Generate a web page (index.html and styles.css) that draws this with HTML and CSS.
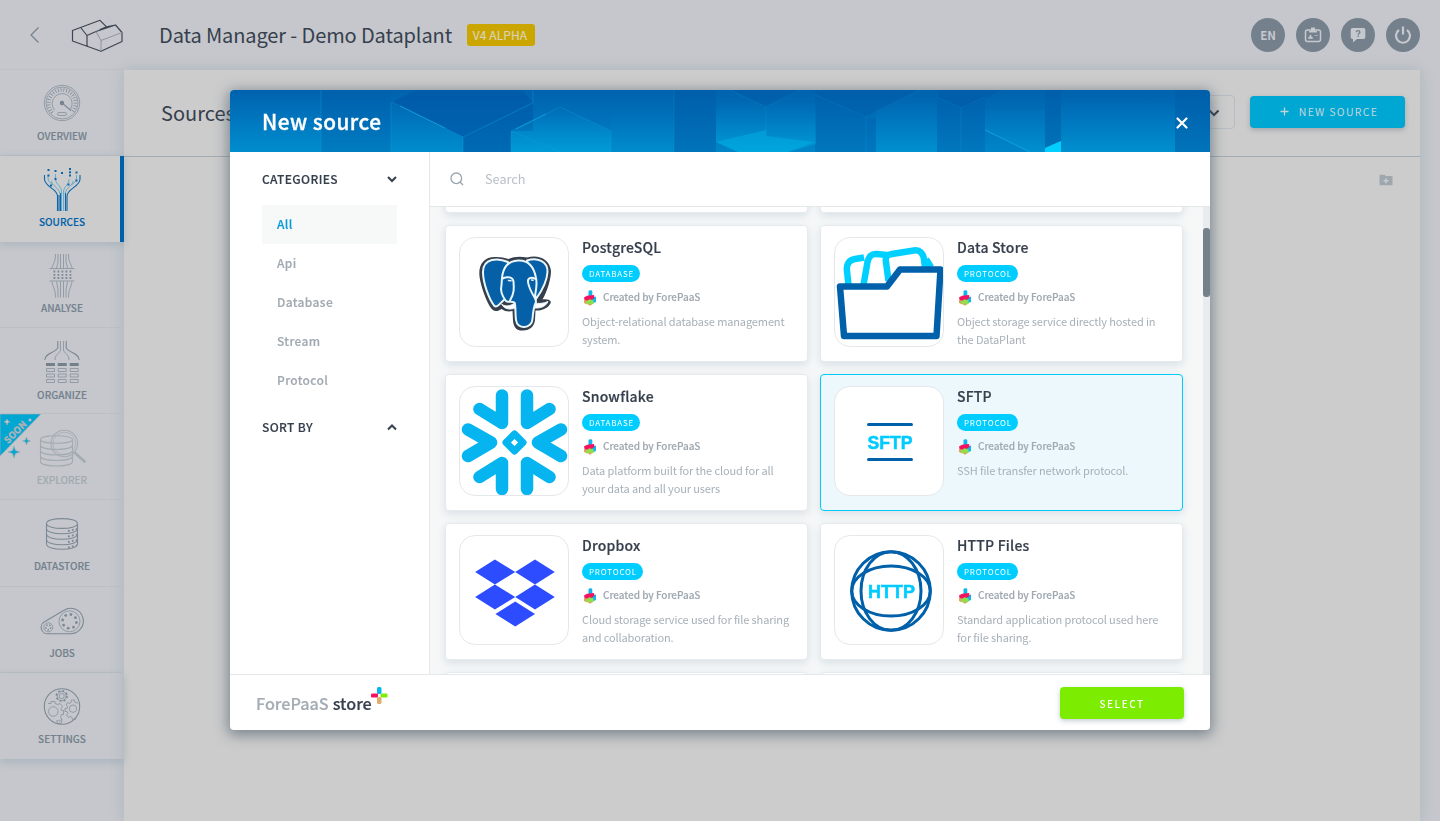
FILE: index.html
```html
<!DOCTYPE html>
<html lang="en">
<head>
<meta charset="utf-8">
<title>Data Manager</title>
<link rel="stylesheet" href="styles.css">
</head>
<body>
<svg class="defs" width="0" height="0">
  <symbol id="brand" viewBox="0 0 14 16">
    <path d="M5.500 1.500q0-1.200 2-1.200q1.800 0 1.800 1.200V7h-3.800z" fill="#12b5ec"/>
    <path d="M8 8l5-1.500v5.500L8 14z" fill="#12b5ec"/>
    <path d="M1 7.500l3-1.800 7-.7.500 3-4 2.500-5.500 1.500z" fill="#f5125f"/>
    <path d="M1 10l3 .5v4L1 13z" fill="#e0a35c"/>
    <path d="M3.200 11.200L6.500 9.300l4.100 1.200v3.300L7 15.300 3.200 13.800z" fill="#8fe04a"/>
    <path d="M5 14.300l2-.8 2 .8-2 1.500z" fill="#e0a35c"/>
  </symbol>
</svg>

<div class="app">
  <header class="topbar">
    <svg class="back" width="10" height="18" viewBox="0 0 10 18"><path d="M8.500 1.500L1 9l7.500 7.500"/></svg>
    <svg class="plant" width="52" height="36" viewBox="71 18 52 36">
      <path class="dark" d="M72.500 30.500L100 20.300l6.500 6.500 9-1.800 6.500 7.500v9L101 51.300 72.500 41zM87 35.500V46M87 35.500l9-4M96 31.500l19.500-6.500M106.500 26.800l-7 3M87 35.500L81 28"/>
      <path class="soft" d="M101 40.500l21-8M101 40.500v10.500M101 40.500l-5-9"/>
    </svg>
    <h1>Data Manager - Demo Dataplant</h1>
    <span class="tag">V4 ALPHA</span>
    <div class="tools">
      <span class="round">EN</span>
      <span class="round"><svg width="18" height="18" viewBox="0 0 18 18"><rect x="1.500" y="4" width="15" height="11.500" rx="2" fill="none" stroke="#c6c8cd" stroke-width="1.500"/><path d="M7 1.500h4v3.500h2v1.500H5V5h2z" fill="#c6c8cd"/><path d="M4.500 12.500v-1l1.500-.7V9h1v1.800l1.500.7v1zM10.500 9.500H14" fill="#c6c8cd" stroke="#c6c8cd" stroke-width=".6"/></svg></span>
      <span class="round"><svg width="18" height="18" viewBox="0 0 18 18"><path d="M3.500 2h11a1.800 1.800 0 0 1 1.800 1.800v7.400a1.800 1.800 0 0 1-1.800 1.800H8l-4 3.500V13h-.5a1.800 1.800 0 0 1-1.800-1.800V3.800A1.800 1.800 0 0 1 3.500 2z" fill="#c6c8cd"/><path d="M7.300 6.200c0-2.200 3.600-2 3.600 0 0 1.200-1.700 1.200-1.700 2.500M9.200 9.600v1.300" fill="none" stroke="#74818d" stroke-width="1.300"/></svg></span>
      <span class="round"><svg width="18" height="20" viewBox="0 0 18 20"><path d="M5 5a7 7 0 1 0 8 0M9 1.500v8" fill="none" stroke="#c6c8cd" stroke-width="2.200"/></svg></span>
    </div>
  </header>

  <div class="columns">
    <nav class="side">
      <a class="item">
        <svg width="50" height="44" viewBox="0 0 50 44"><circle cx="25" cy="21" r="17.700"/><circle cx="25" cy="21" r="16"/><path d="M17.500 28a10 10 0 1 1 16-1"/><path class="ticks" d="M15.500 30.500a13.300 13.300 0 1 1 19 0"/><circle class="solid" cx="25" cy="21" r="2.200"/><path class="mid" d="M25 21l9 7.500"/><rect x="20.500" y="30.500" width="9" height="3" rx="1.500"/></svg>
        <span>OVERVIEW</span>
      </a>
      <a class="item active">
        <svg width="50" height="44" viewBox="0 0 50 44"><path class="mid" d="M7.500 7v4c0 8 12.500 9 13 17v15M43 7v4c0 8-12.500 9-13 17v15"/><path class="mid" d="M22 43V27M23.500 43V25M28.500 43V25"/><path class="soft" d="M14.500 13c0 5 7.500 6 8.500 13M18.500 6v5c0 5 5 6 6 12v20M36 13c0 5-7 6-8 13M32 11c0 6-4 6-5.500 12v20M11 7v3c0 4 3 5 5 7M39.500 7v3c0 4-3 5-5 7"/><path class="dots" d="M10.500 1h2v2h-2zM10.500 6.500h2v2h-2zM17.500 2h2v2h-2zM24 4h2v2h-2zM32 0h2v2h-2zM32 3.300h2v2h-2zM32 6.600h2v2h-2zM38.500 3.500h2v2h-2zM17.500 10h2v2h-2zM38.500 11.500h2v2h-2zM13 16.500h2v2h-2zM30.500 15.500h2v2h-2z"/></svg>
        <span>SOURCES</span>
      </a>
      <a class="item">
        <svg width="50" height="44" viewBox="0 0 50 44"><path d="M18.500 0c0 9-2.500 9-3.500 14M31.500 0c0 9 2.500 9 3.500 14M21 0v8l-1.500 6M23.500 0v14M26.500 0v14M29 0v8l1.500 6M12.500 14.500h25M12.500 27h25M18.500 43.500c0-9-2.500-9-3.500-16M31.500 43.500c0-9 2.500-9 3.500-16M21 43.500v-8l-1.500-8M23.500 43.500v-16M26.500 43.500v-16M29 43.500v-8l1.500-8"/><path class="grid" d="M16.500 17.500h18M16.500 20.800h18M16.500 24h18"/></svg>
        <span>ANALYSE</span>
      </a>
      <a class="item organize">
        <svg width="50" height="44" viewBox="0 0 50 44"><path class="mid" d="M20.800 1v7c-3 5-13 5-13 12M29.200 1v7c3 5 13 5 13 12"/><path d="M23.500 1v9c-1 4-5.500 4-5.500 10M26.500 1v9c1 4 5.500 4 5.500 10"/><path class="dots" d="M9 23h9v3H9zM20.700 23h9v3h-9zM32.700 23h9v3h-9z"/><path d="M9.500 28.500h8v3h-8zM21.200 28.500h8v3h-8zM33.200 28.500h8v3h-8zM9.500 34h8v3h-8zM21.200 34h8v3h-8zM33.200 34h8v3h-8zM9.500 39.500h8v3h-8zM21.200 39.500h8v3h-8zM33.200 39.500h8v3h-8z"/></svg>
        <span>ORGANIZE</span>
      </a>
      <a class="item faded">
        <svg width="50" height="44" viewBox="0 0 50 44"><path class="mid" d="M3.500 13.500c0 5 32 5 32 0s-32-5-32 0v22c0 6 32 6 32 0v-22M3.500 19c0 6 32 6 32 0M3.500 24.500c0 6 32 6 32 0M3.500 30c0 6 32 6 32 0"/><circle cx="27.300" cy="17.500" r="13.300" class="mid"/><circle cx="27.300" cy="17.500" r="11.300"/><path class="thick" d="M37.500 26.500l10 9"/></svg>
        <span>EXPLORER</span>
        <svg class="soon" width="42" height="48" viewBox="0 0 42 48"><path d="M0 0h41L0 42z"/><path d="M14 32l1.500 4.500L20 38l-4.500 1.500L14 44l-1.500-4.500L8 38l4.500-1.500zM26.500 23l1 3 3 1-3 1-1 3-1-3-3-1 3-1z"/><path class="spark" d="M7 5l.8 2 2.200.8-2.200.8L7 11l-.8-2.400-2.200-.8 2.200-.8zM30 4.500l1.500 1.500-1.500 1.500L28.500 6z"/><text transform="translate(8 30) rotate(-45)">SOON</text></svg>
      </a>
      <a class="item">
        <svg width="50" height="44" viewBox="0 0 50 44"><path class="mid" d="M9.500 11.500c0 6.500 31 6.500 31 0s-31-6.500-31 0V32c0 7 31 7 31 0V11.500M9.500 16.500c0 7 31 7 31 0M9.500 22c0 7 31 7 31 0M9.500 27.500c0 7 31 7 31 0"/><path class="grid" d="M31 19l9-2M31 24.500l9-2M31 30l9-2M31 35.500l9-2"/></svg>
        <span>DATASTORE</span>
      </a>
      <a class="item">
        <svg width="50" height="44" viewBox="0 0 50 44"><path class="mid" d="M8 22.500L26.500 11.500A12.700 12.700 0 1 1 33 34.700H11.500A6.400 6.400 0 0 1 8 22.500z"/><circle cx="32.500" cy="22.300" r="10.500"/><circle cx="32.500" cy="22.300" r="7" class="cogs"/><circle cx="11.300" cy="28.300" r="4.500"/><circle cx="11.300" cy="28.300" r="2.500" class="cogs small"/></svg>
        <span>JOBS</span>
      </a>
      <a class="item last">
        <svg width="50" height="44" viewBox="0 0 50 44"><circle class="mid" cx="25" cy="21.500" r="17.700"/><circle cx="24.700" cy="11" r="2.600"/><circle cx="24.700" cy="11" r="5.300" class="teeth"/><circle cx="24.700" cy="11" r="4.500"/><circle cx="16.300" cy="26.500" r="4.800"/><path d="M11 18.500h3v-2h4v2l3 1 2-1 2.500 3-1.500 2 .5 2h2v4h-2l-1 3 1.500 1.500-3 2.500-1.500-1.500M20 35v3.500h4l1-4"/><circle cx="36" cy="23.700" r="3.700"/><path d="M41 18l-3-.5-.5-2.500h-3l-.5 2.500-2 1-1.500-1-1.500 2.500 1.500 1.500-.5 2h-2v3h2l1 2-1.500 1.500 2 2.500 2-1 1.500.8.500 2h3l.5-2"/></svg>
        <span>SETTINGS</span>
      </a>
    </nav>

    <main class="panel">
      <div class="panel-head">
        <h2>Sources</h2>
        <div class="picker"><svg width="12" height="8" viewBox="0 0 12 8"><path d="M1.500 1.500L6 6l4.500-4.500"/></svg></div>
        <button class="new"><svg width="9" height="9" viewBox="0 0 9 9"><path d="M4.500 0.500v8M.5 4.500h8"/></svg>NEW SOURCE</button>
      </div>
      <div class="panel-body">
        <svg width="14" height="12" viewBox="0 0 14 12"><path d="M.5 .8h5l1.300 1.300h6.700v9.200H.5z" fill="#9ea7ad"/><path d="M7 4.300v5M4.500 6.800h5" stroke="#cacccd" stroke-width="1.500"/></svg>
      </div>
    </main>
  </div>
</div>

<div class="overlay">
  <section class="modal">
    <header class="modal-head">
      <svg class="art" width="980" height="62" viewBox="0 0 980 62" preserveAspectRatio="none">
        <defs>
          <linearGradient id="sky" x2="0" y2="1"><stop offset="0" stop-color="#0062ae"/><stop offset=".5" stop-color="#0072bb"/><stop offset="1" stop-color="#0086c8"/></linearGradient>
          <linearGradient id="glow" x2="0" y2="1"><stop offset="0" stop-color="#00a8e0" stop-opacity="0"/><stop offset="1" stop-color="#00b0e6" stop-opacity=".5"/></linearGradient>
        </defs>
        <rect width="980" height="62" fill="url(#sky)"/>
        <g fill="#0059a6">
          <path d="M91 0h70v62H91z" opacity=".2"/>
          <path d="M162 12l25-12h105l11 12-70 35z" opacity=".7"/>
          <path d="M233 47l70-34v28h-22v21h-48z" opacity=".6"/>
          <path d="M444 0h42v62h-42z" opacity=".4"/>
          <path d="M500 0l36 17 36-17zM585 0v6l51 22 54-28zM708 0v8l24 11 40-19z" opacity=".5"/>
          <path d="M585 6l51 22v34h-51zM707 7h48v55h-48zM636 28h10v34h-10z" opacity=".3"/>
          <path d="M815 0h16v51l-16 7zM945 0h35v62h-35z" opacity=".4"/>
        </g>
        <g fill="url(#glow)">
          <path d="M0 0h91v62H0z" opacity=".35"/>
          <path d="M161 12l72 35v15h-72z" opacity=".35"/>
          <path d="M281 41l49-24 51 24v21H281z"/>
          <path d="M381 20h63v42h-63z" opacity=".3"/>
          <path d="M486 12h100v42l-28 8h-50l-22-10z" opacity=".9"/>
          <path d="M646 10h61v52h-61zM755 20h60v42h-15l-45-22zM831 10h114v52H831z" opacity=".45"/>
        </g>
        <path d="M486 52l22 10h28V40zM536 46v16h22l27-10z" fill="#00b9ec" opacity=".4"/>
        <path d="M815 58l16-7v11h-16z" fill="#00cfff"/>
        <g fill="none" stroke="#12a4dd">
          <path d="M162 12l71 35 70-34V0M233 47v15M161 12v50M281 62V41l49-24 51 24v21M281 41l49 21M91 0v62" opacity=".35"/>
          <path d="M170 16l45 22M286 39l30-15" opacity=".8"/>
          <path d="M536 17v45M500 0l36 17 34-17M585 5l51 22 54-27M636 27v35M707 7l24 11 24-11M731 18v44M444 0v62" opacity=".22"/>
          <path d="M755 40l45 22" opacity=".9"/>
        </g>
      </svg>
      <h2>New source</h2>
      <svg class="close" width="12" height="12" viewBox="0 0 12 12"><path d="M1.500 1.500l9 9M10.500 1.500l-9 9"/></svg>
    </header>

    <div class="modal-body">
      <aside class="filters">
        <div class="group">CATEGORIES<svg width="10" height="7" viewBox="0 0 10 7"><path d="M1 1l4 4 4-4"/></svg></div>
        <ul>
          <li class="on">All</li>
          <li>Api</li>
          <li>Database</li>
          <li>Stream</li>
          <li>Protocol</li>
        </ul>
        <div class="group sort">SORT BY<svg width="10" height="7" viewBox="0 0 10 7"><path d="M1 5.500l4-4 4 4"/></svg></div>
      </aside>

      <div class="results">
        <div class="search"><svg width="14" height="14" viewBox="0 0 14 14"><circle cx="6.300" cy="6.300" r="5.300"/><path d="M10 10l3 3"/></svg>Search</div>
        <div class="scroller">
          <div class="cards">
            <article class="card"></article>
            <article class="card"></article>

            <article class="card">
              <div class="tile"><svg width="108" height="108" viewBox="0 0 108 108">
                <path d="M35 19C25 19 19 25 19.300 36C19.500 43 24 58 29 67C33 74.500 37 74 41.500 71C45 73.500 49 74 52.500 73L53 83C54 91 58 93 63 92.500C70 92 74 89 75 82L75.500 72.500C82 73 89 70 91 64C90 61.500 86 61 82.500 61.500C87 54 91 41 91 33C90 21 78 16 67 19.500C60 18 54 18.500 48.500 21C44 19.500 40 18.800 35 19z" fill="#363f4b"/>
                <g fill="#0560a8" stroke="#e9f7fc" stroke-width="2" stroke-linejoin="round" stroke-linecap="round">
                  <path d="M48 24C38 19.500 23 20 23 34C23 45 29 61 34 67.500C37 70.500 39 66 45 61z"/>
                  <path d="M67 22.500C77 19 88 23 87.500 34C87 43 81 54 76 61z"/>
                  <path d="M42 66.500c4 2.500 8 1.500 13-1.500v5c-4 2-11 1.500-13-3.500zM75 65c3 1 9 .5 13-1.500-2 5-8 7-13 6.500z" fill="#fff" stroke-width="1"/>
                  <path d="M42 40C43 29 49 23 58 22.500C68 22 74 29 76 40C77.500 46 76 51 75 58L76 64C74 68 73 74 72.500 81C72 91 57 92 56 82C55 75 56 68 54.500 64.500C51 62.500 48 65 46 63C42 58 40 53 41.500 47z"/>
                  <path d="M42.500 40.500C48 38 53 39 53.500 43.500C54 50 54.500 55 50 62.500M75.500 41C71 38.500 67.500 40 68 44C69 51 72.500 56 75.500 61" fill="none"/>
                  <path d="M48.500 42.500l2.500.3M71.500 42l1.500.3" stroke-width="1.500"/>
                </g>
              </svg></div>
              <div class="info"><h3>PostgreSQL</h3><span class="badge">DATABASE</span><div class="by"><svg width="14" height="16"><use href="#brand"/></svg><span>Created by ForePaaS</span></div><p>Object-relational database management system.</p></div>
            </article>

            <article class="card">
              <div class="tile"><svg width="108" height="108" viewBox="0 0 108 108">
                <g fill="none" stroke="#00d0ff" stroke-width="6.500" stroke-linejoin="round">
                  <path d="M13.500 47L12 33c-1-7 2-11 8-12l9-1.500M28.500 47l4-23c1-5 4-8.500 9-8l11 1M53.500 43L51 24c-1-5 1-7 6-8l22-3.500c6-1 9 3 10 8.500l1 8"/>
                  <path d="M90 22l5 8" stroke-width="9"/>
                </g>
                <path d="M5 48.500h47L65 31.500h40.500L101.500 98H9z" fill="#fff" stroke="#0061aa" stroke-width="6.500" stroke-linejoin="round"/>
              </svg></div>
              <div class="info"><h3>Data Store</h3><span class="badge">PROTOCOL</span><div class="by"><svg width="14" height="16"><use href="#brand"/></svg><span>Created by ForePaaS</span></div><p>Object storage service directly hosted in the DataPlant</p></div>
            </article>

            <article class="card">
              <div class="tile"><svg width="108" height="108" viewBox="0 0 108 108">
                <g fill="none" stroke="#06b5f0" stroke-width="12.500" stroke-linecap="round" stroke-linejoin="round">
                  <path d="M42 8.500v27.500L19.500 22M67 8.500v27.500L89.500 22M42 102V76L19.500 90M67 102V76L89.500 90M8 42.500l23 13L8 69M101 42.500l-23 13L101 69"/>
                </g>
                <path d="M54.500 47l8.500 8.500-8.500 8.500-8.500-8.500z" fill="none" stroke="#06b5f0" stroke-width="7" stroke-linejoin="round"/>
              </svg></div>
              <div class="info"><h3>Snowflake</h3><span class="badge">DATABASE</span><div class="by"><svg width="14" height="16"><use href="#brand"/></svg><span>Created by ForePaaS</span></div><p>Data platform built for the cloud for all your data and all your users</p></div>
            </article>

            <article class="card chosen">
              <div class="tile"><svg width="108" height="108" viewBox="0 0 108 108">
                <path d="M33.500 37.500h43M33.500 72.500h43" stroke="#0061aa" stroke-width="3" stroke-linecap="round"/>
                <text x="55" y="61.500" textLength="45" lengthAdjust="spacingAndGlyphs">SFTP</text>
              </svg></div>
              <div class="info"><h3>SFTP</h3><span class="badge">PROTOCOL</span><div class="by"><svg width="14" height="16"><use href="#brand"/></svg><span>Created by ForePaaS</span></div><p>SSH file transfer network protocol.</p></div>
            </article>

            <article class="card">
              <div class="tile"><svg width="108" height="108" viewBox="0 0 108 108">
                <path d="M33 24l18 12.500L33 49 15.500 36.500zM68.500 24L86 36.500 68.500 49 51 36.500zM33 49l18 12.500L33 74 15.500 61.500zM68.500 49L86 61.500 68.500 74 51 61.500zM51 66l17.500 12.500L51 91 33.500 78.500z" fill="#2d4cff" transform="translate(-2.400 -.5) scale(1.130 1)"/>
              </svg></div>
              <div class="info"><h3>Dropbox</h3><span class="badge">PROTOCOL</span><div class="by"><svg width="14" height="16"><use href="#brand"/></svg><span>Created by ForePaaS</span></div><p>Cloud storage service used for file sharing and collaboration.</p></div>
            </article>

            <article class="card">
              <div class="tile"><svg width="108" height="108" viewBox="0 0 108 108">
                <g fill="none" stroke="#0061aa" stroke-width="3"><circle cx="56" cy="55" r="39.300"/><ellipse cx="56" cy="55" rx="30" ry="39.300"/><ellipse cx="56" cy="55" rx="39.300" ry="25"/></g>
                <text x="56.500" y="62" textLength="47" lengthAdjust="spacingAndGlyphs">HTTP</text>
              </svg></div>
              <div class="info"><h3>HTTP Files</h3><span class="badge">PROTOCOL</span><div class="by"><svg width="14" height="16"><use href="#brand"/></svg><span>Created by ForePaaS</span></div><p>Standard application protocol used here for file sharing.</p></div>
            </article>

            <article class="card"></article>
            <article class="card"></article>
          </div>
          <div class="track"><div class="thumb"></div></div>
        </div>
      </div>
    </div>

    <footer class="modal-foot">
      <div class="store"><span>ForePaaS</span><b>store</b><svg width="17" height="17" viewBox="0 0 17 17"><rect x="6" y="0" width="4.500" height="7" rx="1.500" fill="#06b5f0"/><rect x="0" y="6.500" width="7" height="4" rx="1" fill="#f5125f"/><rect x="9.500" y="6.500" width="7" height="4" rx="1" fill="#7ced06"/><rect x="6" y="10" width="4.500" height="7" rx="1.500" fill="#dfae6c"/></svg></div>
      <button class="select">SELECT</button>
    </footer>
  </section>
</div>
</body>
</html>
```

FILE: styles.css
```css
* { box-sizing: border-box; }

body {
  margin: 0;
  height: 821px;
  overflow: hidden;
  background: #c5c7cc;
  color: #363f4d;
  font-family: "Noto Sans CJK SC", "Noto Sans", sans-serif;
}

h1, h2, h3, p, ul { margin: 0; padding: 0; font-weight: 400; }
button { border: 0; font-family: inherit; }
svg { display: block; flex: none; }
.defs { position: absolute; }

.app { display: flex; flex-direction: column; height: 821px; }

/* Top bar */
.topbar { display: flex; align-items: center; height: 70px; padding: 0 20px 0 30px; flex: none; }
.back { fill: none; stroke: #74818d; stroke-width: 1.2; }
.plant { margin: 2px 0 0 31px; fill: none; stroke-width: 1.2; stroke-linejoin: round; }
.plant .dark { stroke: #3c4652; }
.plant .soft { stroke: #8b959e; stroke-width: 1; }
.topbar h1 { margin-left: 36px; width: 293px; font-size: 20px; line-height: 30px; letter-spacing: -.11px; white-space: nowrap; }
.tag { margin-left: 15px; width: 68px; height: 22px; padding-right: 2px; border-radius: 3px; background: #cba600; color: #d9d2b8; font-size: 12px; line-height: 22px; text-align: center; letter-spacing: .1px; -webkit-text-stroke: .2px; }
.tools { display: flex; gap: 11px; margin-left: auto; }
.round { display: flex; align-items: center; justify-content: center; width: 34px; height: 34px; border-radius: 50%; background: #74818d; color: #c6c8cd; font-size: 11.500px; font-weight: 700; line-height: 14px; }

.columns { display: flex; flex: 1; }

/* Sidebar */
.side { width: 124px; flex: none; box-shadow: 0 -1px 0 #bcc1c7; }
.item { position: relative; display: flex; flex-direction: column; align-items: center; height: 86.100px; padding-top: 12px; border-bottom: 1px solid #b9bfc5; color: #74818d; }
.item svg { fill: none; stroke: #7d8994; stroke-width: .7; }
.item .mid { stroke-width: 1.1; }
.item .thick { stroke-width: 2.600; stroke-linecap: round; }
.item .solid, .item .dots { fill: #74818d; stroke: none; }
.item .ticks { stroke-width: 3.500; stroke-dasharray: .8 1.900; }
.item .grid { stroke-width: 1.800; stroke-dasharray: 1.800 2.200; }
.item .cogs { stroke-width: 2.500; stroke-dasharray: 2.500 3; }
.item .cogs.small { stroke-width: 1.500; stroke-dasharray: 1.500 1.600; }
.item .teeth { stroke-width: 1.600; stroke-dasharray: 2 2.160; }
.item > span { margin-top: 3px; font-size: 10px; font-weight: 500; line-height: 14px; letter-spacing: 0; -webkit-text-stroke: .15px; }
.item.organize > span { margin-top: 4px; }
.item.active { background: #cccccc; border-bottom: 0; border-right: 4px solid #0061aa; padding-left: 4px; color: #0061aa; box-shadow: 0 2px 8px rgba(70, 110, 130, .22); }
.item.active svg { stroke: #0b65ab; }
.item.active .dots { fill: #0b65ab; }
.item.active .soft { stroke: #3a9cc8; }
.item.faded { color: #a3abb2; }
.item.faded svg { stroke: #a3abb2; }
.item.last { border-bottom: 0; box-shadow: 0 3px 8px rgba(70, 110, 130, .22); }
.item .soon { position: absolute; left: 0; top: 0; stroke: none; fill: #00a7d2; }
.soon .spark { fill: #c6d6dd; }
.soon text { fill: #c9d4da; font-size: 9px; font-weight: 500; letter-spacing: .5px; }

/* Page panel */
.panel { width: 1296px; background: #cccccc; box-shadow: 0 0 14px rgba(70, 110, 130, .2); }
.panel-head { display: flex; align-items: center; height: 87px; padding: 0 15px 2px 37px; border-bottom: 1px solid #a3abb2; }
.panel-head h2 { padding-top: 2px; font-size: 20px; line-height: 30px; letter-spacing: 0; }
.picker { display: flex; align-items: center; justify-content: flex-end; width: 160px; height: 34px; margin-left: auto; padding-right: 14px; padding-top: 2px; border: 1px solid #b7bdc2; border-radius: 4px; }
.picker svg { fill: none; stroke: #363f4d; stroke-width: 2; }
.new { display: flex; align-items: center; justify-content: center; gap: 10px; width: 155px; height: 32px; margin-left: 15px; padding: 0 4px 1px 7px; border-radius: 4px; background: #00a7d2; color: #c3d5dc; font-size: 10.500px; letter-spacing: 1.300px; box-shadow: 0 2px 5px rgba(60, 80, 100, .3); }
.new svg { stroke: #c3d5dc; stroke-width: 1.3; }
.panel-body { display: flex; justify-content: flex-end; padding: 17px 27px; }

/* Dialog */
.overlay { position: fixed; inset: 0; display: flex; justify-content: center; align-items: flex-start; padding-top: 90px; }
.modal { display: flex; flex-direction: column; width: 980px; height: 640px; border-radius: 4px; background: #fff; box-shadow: 0 3px 14px 2px rgba(65, 85, 100, .6); overflow: hidden; }
.modal-head { position: relative; display: flex; align-items: center; justify-content: space-between; height: 62px; flex: none; padding: 2px 22px 0 32px; color: #fff; }
.art { position: absolute; left: 0; top: 0; }
.modal-head h2 { position: relative; margin-bottom: 2px; font-size: 20.800px; font-weight: 500; line-height: 30px; letter-spacing: .45px; -webkit-text-stroke: .3px; }
.close { position: relative; stroke: #fff; stroke-width: 2.200; stroke-linecap: round; margin-top: 1px; }

.modal-body { display: flex; flex: 1; min-height: 0; }
.filters { width: 200px; border-right: 1px solid #e5e8ea; padding: 17px 32px 0; }
.group { display: flex; justify-content: space-between; align-items: center; height: 20px; font-size: 12px; font-weight: 500; line-height: 20px; letter-spacing: .35px; -webkit-text-stroke: .15px; }
.group svg { fill: none; stroke: #363f4d; stroke-width: 2; }
.filters ul { margin-top: 16px; list-style: none; }
.filters li { height: 39px; padding-left: 15px; color: #a0a9b1; font-size: 12px; font-weight: 500; line-height: 38px; letter-spacing: .35px; -webkit-text-stroke: .15px; }
.filters li.on { background: #f7f9f9; color: #0a9bd8; }
.sort { margin-top: 17px; }

.results { display: flex; flex-direction: column; width: 780px; min-width: 0; }
.search { display: flex; align-items: center; gap: 21px; height: 55px; flex: none; padding-left: 20px; border-bottom: 1px solid #e5e8ea; color: #b9c0c6; font-size: 12.700px; line-height: 20px; }
.search svg { fill: none; stroke: #9aa4ad; stroke-width: 1.3; }
.scroller { display: flex; justify-content: space-between; flex: 1; min-height: 0; overflow: hidden; background: #f6f8f8; }
.cards { display: grid; grid-template-columns: 363px 363px; grid-auto-rows: 137px; gap: 12px; margin: -131px 0 0 15px; }
.card { display: flex; gap: 13px; padding: 11px 13px; border: 1px solid #e6eaed; border-radius: 4px; background: #fff; box-shadow: 0 3px 8px rgba(110, 140, 165, .22); }
.card.chosen { border-color: #00cbfb; background: #edf8fc; }
.tile { width: 110px; height: 110px; flex: none; border: 1px solid #e4e8eb; border-radius: 16px; background: #fff; overflow: hidden; }
.tile text { fill: #00cbff; font-family: "Liberation Sans", Arial, sans-serif; font-size: 18px; font-weight: 700; text-anchor: middle; stroke: #00cbff; stroke-width: .5; }
.info { display: flex; flex-direction: column; align-items: flex-start; width: 212px; flex: none; }
.info h3 { font-size: 14px; font-weight: 500; line-height: 20px; letter-spacing: .2px; -webkit-text-stroke: .2px; }
.badge { height: 17px; margin-top: 8px; padding: 0 6px 0 7px; border-radius: 9px; background: #00cdff; color: #fff; font-size: 8px; line-height: 17px; letter-spacing: .8px; }
.by { display: flex; align-items: center; gap: 6px; height: 16px; margin: 8px 0 0 1px; color: #a0a9b1; font-size: 10px; font-weight: 500; line-height: 14px; letter-spacing: -.05px; -webkit-text-stroke: .15px; }
.by span { margin-bottom: 2px; }
.info p { margin-top: 6px; color: #a7b0b8; font-size: 11px; line-height: 18px; letter-spacing: -.12px; }
.track { width: 7px; flex: none; padding-top: 21px; background: #e8ecee; }
.thumb { height: 69px; border-radius: 3px; background: #74818d; }

.modal-foot { display: flex; align-items: center; justify-content: space-between; height: 56px; flex: none; padding: 0 26px; border-top: 1px solid #e5e8ea; }
.store { display: flex; align-items: center; font-size: 16.200px; line-height: 24px; padding-top: 1px; }
.store span { color: #a4adb5; font-weight: 500; -webkit-text-stroke: .2px; }
.store b { margin-left: 4px; font-weight: 500; -webkit-text-stroke: .2px; }
.store svg { margin: -16px 0 0 -1px; }
.select { width: 124px; height: 32px; padding-top: 2px; border-radius: 4px; background: #7ced00; color: #fff; font-size: 10px; font-weight: 500; letter-spacing: 1.500px; box-shadow: 0 2px 5px rgba(60, 90, 110, .3); }
```
